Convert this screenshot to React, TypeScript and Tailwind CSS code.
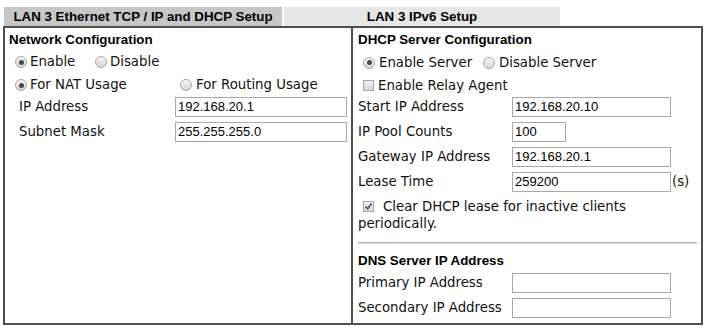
import React from 'react';

const Radio = ({ checked }: { checked?: boolean }) => (
    <span className="flex h-[12px] w-[12px] shrink-0 items-center justify-center rounded-full border border-[#a6a6a6] bg-linear-to-b from-[#f6f6f6] to-[#d6d6d6]">
        {checked && <span className="h-[5px] w-[5px] rounded-full bg-[#4a4a4a]" />}
    </span>
);

const Check = ({ checked }: { checked?: boolean }) => (
    <span className="flex h-[11px] w-[11px] shrink-0 items-center justify-center border border-[#a6a6a6] bg-linear-to-b from-[#f0f0f0] to-[#d8d8d8]">
        {checked && (
            <svg width="9" height="9" viewBox="0 0 9 9">
                <path d="M1.5 4.5 L3.6 6.8 L7.6 1.6" fill="none" stroke="#555" strokeWidth="1.7" />
            </svg>
        )}
    </span>
);

const Field = ({ value = '', w = 'w-[159px]' }: { value?: string; w?: string }) => (
    <div className={`${w} flex h-[20px] items-center border border-[#a9a9a9] bg-white px-[2px] font-['Liberation_Sans',Arial,sans-serif] text-[13px] text-black`}>
        {value}
    </div>
);

const Row = ({ label, children, className = '' }: { label: string; children: React.ReactNode; className?: string }) => (
    <div className={`flex h-[20px] items-center ${className}`}>
        <span className="w-[154px]">{label}</span>
        {children}
    </div>
);

const Head = ({ children, className = '' }: { children: React.ReactNode; className?: string }) => (
    <div className={`flex items-center font-['Liberation_Sans',Arial,sans-serif] text-[13.33px] font-bold text-black ${className}`}>
        {children}
    </div>
);

export default function App() {
    return (
        <div className="h-[329px] w-[706px] bg-white pl-[3px] pt-[7px] font-['DejaVu_Sans',Verdana,sans-serif] text-[13.3px] text-[#111]">
            <div className="ml-[1px] flex h-[19px] font-['Liberation_Sans',Arial,sans-serif] text-[13.33px] font-bold text-black">
                <div className="flex w-[278px] items-center justify-center bg-[#c6c6c6]">LAN 3 Ethernet TCP / IP and DHCP Setup</div>
                <div className="ml-[2px] flex w-[276px] items-center justify-center bg-[#e6e6e6]">LAN 3 IPv6 Setup</div>
            </div>
            <div className="flex h-[299px] w-[700px] border-2 border-[#4f4f4f]">
                {/* left column */}
                <div className="w-[348px] border-r-2 border-[#4f4f4f] pl-[4px]">
                    <Head className="h-[23px]">Network Configuration</Head>
                    <div className="flex h-[22px] items-center pl-[6px]">
                        <div className="flex w-[80px] items-center gap-[3px]">
                            <Radio checked />
                            <span>Enable</span>
                        </div>
                        <div className="flex items-center gap-[3px]">
                            <Radio />
                            <span>Disable</span>
                        </div>
                    </div>
                    <div className="flex h-[24px] items-center pl-[6px]">
                        <div className="flex w-[165px] items-center gap-[3px]">
                            <Radio checked />
                            <span>For NAT Usage</span>
                        </div>
                        <div className="flex items-center gap-[4px]">
                            <Radio />
                            <span>For Routing Usage</span>
                        </div>
                    </div>
                    <div className="pl-[10px]">
                        <Row label="IP Address" className="[&>span]:w-[156px]">
                            <Field value="192.168.20.1" w="w-[172px]" />
                        </Row>
                        <Row label="Subnet Mask" className="mt-[5px] [&>span]:w-[156px]">
                            <Field value="255.255.255.0" w="w-[172px]" />
                        </Row>
                    </div>
                </div>
                {/* right column */}
                <div className="flex-1 pl-[5px]">
                    <Head className="h-[23px]">DHCP Server Configuration</Head>
                    <div className="flex h-[23px] items-center pl-[5px]">
                        <div className="flex w-[120px] items-center gap-[4px]">
                            <Radio checked />
                            <span>Enable Server</span>
                        </div>
                        <div className="flex items-center gap-[4px]">
                            <Radio />
                            <span>Disable Server</span>
                        </div>
                    </div>
                    <div className="flex h-[23px] items-center gap-[4px] pl-[5px]">
                        <Check />
                        <span>Enable Relay Agent</span>
                    </div>
                    <Row label="Start IP Address">
                        <Field value="192.168.20.10" />
                    </Row>
                    <Row label="IP Pool Counts" className="mt-[5px]">
                        <Field value="100" w="w-[54px]" />
                    </Row>
                    <Row label="Gateway IP Address" className="mt-[5px]">
                        <Field value="192.168.20.1" />
                    </Row>
                    <Row label="Lease Time" className="mt-[5px]">
                        <Field value="259200" />
                        <span className="ml-[1px]">(s)</span>
                    </Row>
                    <div className="mt-[6px] leading-[17px]">
                        <div className="flex items-center pl-[5px]">
                            <Check checked />
                            <span className="ml-[9px]">Clear DHCP lease for inactive clients</span>
                        </div>
                        <div>periodically.</div>
                    </div>
                    <div className="mr-[4px] mt-[10px] h-[2px] border-t border-b border-[#b4b4b4] border-b-[#dcdcdc]" />
                    <Head className="mt-[9px] h-[16px]">DNS Server IP Address</Head>
                    <Row label="Primary IP Address" className="mt-[4px]">
                        <Field />
                    </Row>
                    <Row label="Secondary IP Address" className="mt-[5px]">
                        <Field />
                    </Row>
                </div>
            </div>
        </div>
    );
}
